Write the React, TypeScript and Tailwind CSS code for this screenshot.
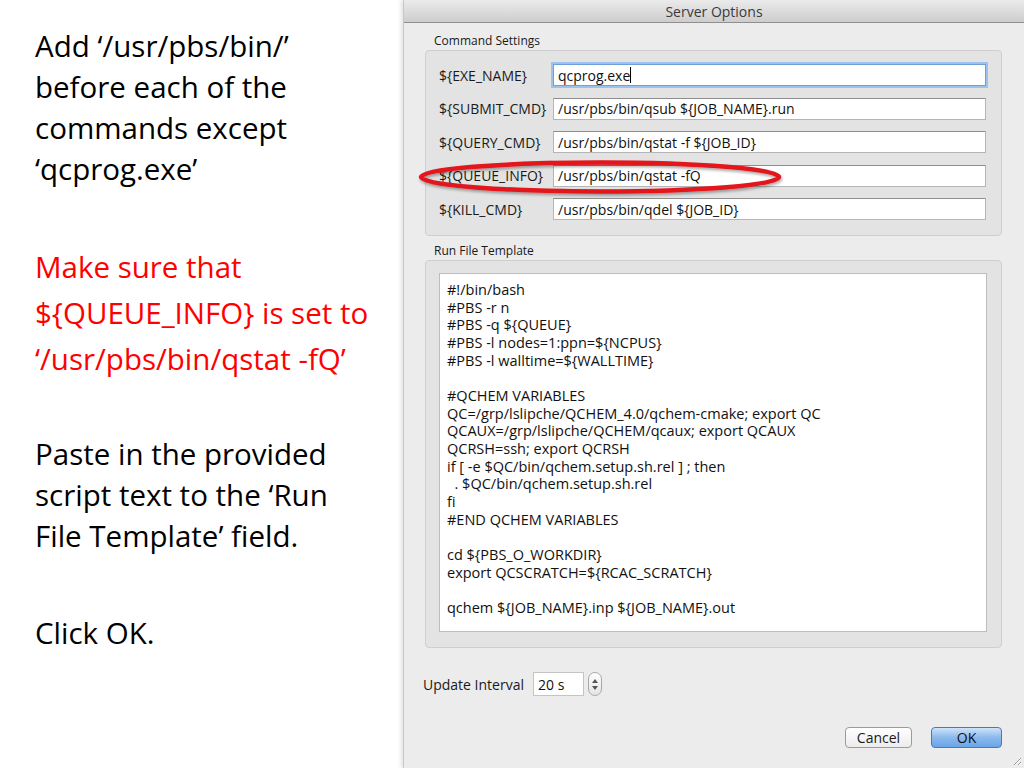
import React from "react";

const slideFont = { fontFamily: '"Open Sans", "Liberation Sans", sans-serif' };
const uiFont = { fontFamily: '"Open Sans", "Liberation Sans", sans-serif' };

const commands = [
  { label: "${EXE_NAME}", value: "qcprog.exe", focused: true },
  { label: "${SUBMIT_CMD}", value: "/usr/pbs/bin/qsub ${JOB_NAME}.run" },
  { label: "${QUERY_CMD}", value: "/usr/pbs/bin/qstat -f ${JOB_ID}" },
  { label: "${QUEUE_INFO}", value: "/usr/pbs/bin/qstat -fQ" },
  { label: "${KILL_CMD}", value: "/usr/pbs/bin/qdel ${JOB_ID}" },
];

const template = [
  "#!/bin/bash",
  "#PBS -r n",
  "#PBS -q ${QUEUE}",
  "#PBS -l nodes=1:ppn=${NCPUS}",
  "#PBS -l walltime=${WALLTIME}",
  "",
  "#QCHEM VARIABLES",
  "QC=/grp/lslipche/QCHEM_4.0/qchem-cmake; export QC",
  "QCAUX=/grp/lslipche/QCHEM/qcaux; export QCAUX",
  "QCRSH=ssh; export QCRSH",
  "if [ -e $QC/bin/qchem.setup.sh.rel ] ; then",
  "  . $QC/bin/qchem.setup.sh.rel",
  "fi",
  "#END QCHEM VARIABLES",
  "",
  "cd ${PBS_O_WORKDIR}",
  "export QCSCRATCH=${RCAC_SCRATCH}",
  "",
  "qchem ${JOB_NAME}.inp ${JOB_NAME}.out",
];

function CommandRow({ label, value, focused }: { label: string; value: string; focused?: boolean }) {
  return (
    <div className="flex items-center h-[22px]">
      <div className="w-[114px] text-[14px] text-[#1a1a1a] whitespace-nowrap">{label}</div>
      <div
        className={
          focused
            ? "flex-1 h-[22px] bg-white border border-[#6fa0d8] shadow-[0_0_0_2px_#9dc3ec] flex items-center px-[4px] text-[14px] text-[#111]"
            : "flex-1 h-[22px] bg-white border border-[#b5b5b5] border-t-[#8e8e8e] flex items-center px-[4px] text-[14px] text-[#111]"
        }
      >
        <span className="whitespace-nowrap">{value}</span>
        {focused && <span className="w-px h-[16px] bg-black" />}
      </div>
    </div>
  );
}

export default function App() {
  return (
    <div className="w-[1024px] h-[768px] flex bg-white overflow-hidden">
      {/* slide text */}
      <div className="w-[403px] shrink-0 pl-[35px] pt-[25px] text-[29.5px] text-black whitespace-nowrap" style={slideFont}>
        <p className="leading-[41px]">
          Add ‘/usr/pbs/bin/’
          <br />
          before each of the
          <br />
          commands except
          <br />
          ‘qcprog.exe’
        </p>
        <p className="leading-[46px] text-[#ff0000] mt-[55px]">
          Make sure that
          <br />
          {"${QUEUE_INFO} is set to"}
          <br />
          ‘/usr/pbs/bin/qstat -fQ’
        </p>
        <p className="leading-[41px] mt-[51px]">
          Paste in the provided
          <br />
          script text to the ‘Run
          <br />
          File Template’ field.
        </p>
        <p className="leading-[41px] mt-[56px]">Click OK.</p>
      </div>

      {/* dialog */}
      <div
        className="relative flex-1 flex flex-col bg-[#ececec] border-l border-[#c8c8c8] shadow-[-2px_0_4px_rgba(0,0,0,0.12)]"
        style={uiFont}
      >
        <div className="h-[23px] shrink-0 flex items-center justify-center bg-gradient-to-b from-[#ebebeb] to-[#cdcdcd] border-b border-[#8f8f8f] text-[14px] text-[#3a3a3a]">
          Server Options
        </div>

        <div className="flex flex-col pl-[21px] pr-[22px]">
          <div className="mt-[10px] pl-[9px] text-[12px] leading-[15px] text-[#1a1a1a]">Command Settings</div>
          <div className="mt-[2px] rounded-[4px] border border-[#cfcfcf] bg-[#e3e3e3] pl-[13px] pr-[15px] pt-[13px] pb-[15px] flex flex-col gap-[11.5px]">
            {commands.map((c) => (
              <CommandRow key={c.label} {...c} />
            ))}
          </div>

          <div className="mt-[7px] pl-[9px] text-[12px] leading-[15px] text-[#1a1a1a]">Run File Template</div>
          <div className="mt-[2px] h-[388px] rounded-[4px] border border-[#cfcfcf] bg-[#e3e3e3] pl-[13px] pr-[14px] pt-[12px] pb-[15px] flex">
            <div className="flex-1 bg-white border border-[#bdbdbd] pl-[7px] pt-[7px] text-[14.5px] leading-[17.67px] text-[#111]">
              {template.map((line, i) => (
                <div key={i} className="h-[17.67px] whitespace-pre">
                  {line}
                </div>
              ))}
            </div>
          </div>

          <div className="mt-[24px] -ml-[2px] flex items-center gap-[9px] h-[24px]">
            <span className="text-[14px] text-[#1a1a1a]">Update Interval</span>
            <div className="flex items-center gap-[4px]">
              <div className="w-[51px] h-[24px] bg-white border border-[#c4c4c4] flex items-center px-[4px] text-[14px] text-[#111]">
                20 s
              </div>
              <div className="w-[14px] h-[24px] rounded-[7px] border border-[#a8a8a8] bg-gradient-to-b from-[#ffffff] to-[#e4e4e4] flex flex-col items-center justify-center gap-[3px]">
                <svg width="6" height="4" viewBox="0 0 6 4">
                  <path d="M0 4 L3 0 L6 4 Z" fill="#555" />
                </svg>
                <svg width="6" height="4" viewBox="0 0 6 4">
                  <path d="M0 0 L3 4 L6 0 Z" fill="#555" />
                </svg>
              </div>
            </div>
          </div>

          <div className="mt-[31px] flex justify-end gap-[19px]">
            <button className="w-[67px] h-[21px] rounded-[4px] border border-[#9b9b9b] bg-gradient-to-b from-[#ffffff] to-[#ececec] text-[14px] text-[#1a1a1a] leading-none">
              Cancel
            </button>
            <button className="w-[71px] h-[21px] rounded-[4px] border border-[#4d78b0] bg-gradient-to-b from-[#cfe3fa] via-[#8bb9ec] to-[#6aa5e8] text-[14px] text-[#111] leading-none">
              OK
            </button>
          </div>
        </div>

        {/* resize grip */}
        <svg className="absolute right-[2px] bottom-[2px]" width="12" height="12" viewBox="0 0 12 12">
          <path d="M11 4 L4 11 M11 8 L8 11" stroke="#9a9a9a" strokeWidth="1" />
          <path d="M11 5 L5 11 M11 9 L9 11" stroke="#ffffff" strokeWidth="1" />
        </svg>

        {/* red highlight ellipse */}
        <svg
          className="absolute left-[12px] top-[157px] pointer-events-none"
          width="384"
          height="42"
          viewBox="0 0 384 42"
        >
          <defs>
            <filter id="sh" x="-5%" y="-30%" width="110%" height="170%">
              <feDropShadow dx="1" dy="2" stdDeviation="1.5" floodColor="#000" floodOpacity="0.35" />
            </filter>
          </defs>
          <ellipse cx="184" cy="20" rx="179" ry="14.5" fill="none" stroke="#e3141b" strokeWidth="4.5" filter="url(#sh)" />
        </svg>
      </div>
    </div>
  );
}
